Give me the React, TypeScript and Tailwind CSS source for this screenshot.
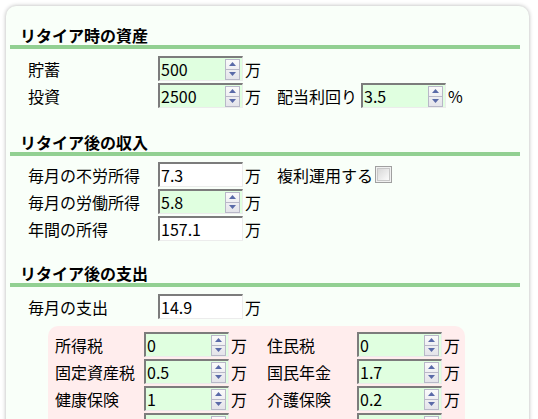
const FONT = { fontFamily: '"Noto Sans CJK JP", "Noto Sans", sans-serif' };

function Spinner() {
  return (
    <div className="ml-auto mr-[2px] flex h-[21px] w-[15px] flex-col border border-[#b8b8c8] bg-gradient-to-b from-[#fafafa] to-[#e4e4ea]">
      <div className="flex flex-1 items-center justify-center border-b border-[#b8b8c8]">
        <svg width="7" height="4" viewBox="0 0 7 4">
          <path d="M0 4 L3.5 0 L7 4 Z" fill="#5a6aa8" />
        </svg>
      </div>
      <div className="flex flex-1 items-center justify-center">
        <svg width="7" height="4" viewBox="0 0 7 4">
          <path d="M0 0 L3.5 4 L7 0 Z" fill="#5a6aa8" />
        </svg>
      </div>
    </div>
  );
}

function NumBox({ value, spin = true }: { value: string; spin?: boolean }) {
  return (
    <div
      className={`flex h-[25px] w-[85px] items-center border-l-2 border-t-2 border-b border-r border-l-[#7c7c7c] border-t-[#7c7c7c] border-b-[#ececec] border-r-[#ececec] pl-[1px] text-[16px] leading-none text-black ${
        spin ? 'bg-[#e0ffe0]' : 'bg-white'
      }`}
    >
      {value && <span>{value}</span>}
      {spin && <Spinner />}
    </div>
  );
}

function Heading({ children }: { children: string }) {
  return (
    <div>
      <div className="pl-[10px] text-[16px] font-bold leading-[20px]">{children}</div>
      <div className="h-[4px] w-[510px] bg-[#92d092]" />
    </div>
  );
}

function Row({ label, children }: { label: string; children: React.ReactNode }) {
  return (
    <div className="flex h-[25px] items-center">
      <span className="w-[130px]">{label}</span>
      {children}
    </div>
  );
}

function Unit({ u = '万' }: { u?: string }) {
  return <span className="ml-[2px]">{u}</span>;
}

function PinkRow({
  l1,
  v1,
  l2,
  v2,
}: {
  l1: string;
  v1: string;
  l2: string;
  v2: string;
}) {
  return (
    <div className="flex h-[25px] items-center">
      <span className="w-[89px]">{l1}</span>
      <NumBox value={v1} />
      <span className="ml-[2px] w-[16px]">{l1 ? '万' : ''}</span>
      <span className="ml-[20px] w-[90px]">{l2}</span>
      <NumBox value={v2} />
      <span className="ml-[2px]">{l2 ? '万' : ''}</span>
    </div>
  );
}

export default function App() {
  return (
    <div className="h-[419px] w-[538px] overflow-hidden bg-white text-[16px] text-black" style={FONT}>
      <div className="ml-[6px] mt-[6px] h-[440px] w-[523px] rounded-[10px] bg-[#f9fff9] pt-[19px] shadow-[0_0_4px_rgba(0,0,0,0.3)]">
        <div className="ml-[4px]">
          <Heading>リタイア時の資産</Heading>
          <div className="mt-[7px] flex flex-col gap-[2px] pl-[18px]">
            <Row label="貯蓄">
              <NumBox value="500" />
              <Unit />
            </Row>
            <Row label="投資">
              <NumBox value="2500" />
              <Unit />
              <span className="ml-[16px] mr-[4px]">配当利回り</span>
              <NumBox value="3.5" />
              <Unit u="%" />
            </Row>
          </div>

          <div className="mt-[24px]">
            <Heading>リタイア後の収入</Heading>
          </div>
          <div className="mt-[6px] flex flex-col gap-[2px] pl-[18px]">
            <Row label="毎月の不労所得">
              <NumBox value="7.3" spin={false} />
              <Unit />
              <span className="ml-[16px]">複利運用する</span>
              <span className="ml-[2px] flex h-[17px] w-[17px] items-center justify-center border border-[#a0a0a0] bg-[#f0f0f0]">
                <span className="h-[13px] w-[13px] border border-[#c8c8c8] bg-gradient-to-br from-[#d8d8d8] to-[#fcfcfc]" />
              </span>
            </Row>
            <Row label="毎月の労働所得">
              <NumBox value="5.8" />
              <Unit />
            </Row>
            <Row label="年間の所得">
              <NumBox value="157.1" spin={false} />
              <Unit />
            </Row>
          </div>

          <div className="mt-[22px]">
            <Heading>リタイア後の支出</Heading>
          </div>
          <div className="mt-[7px] pl-[18px]">
            <Row label="毎月の支出">
              <NumBox value="14.9" spin={false} />
              <Unit />
            </Row>
            <div className="ml-[20px] mt-[7px] flex w-[417px] flex-col gap-[2px] rounded-[10px] bg-[#ffeded] pb-[8px] pl-[7px] pt-[6px]">
              <PinkRow l1="所得税" v1="0" l2="住民税" v2="0" />
              <PinkRow l1="固定資産税" v1="0.5" l2="国民年金" v2="1.7" />
              <PinkRow l1="健康保険" v1="1" l2="介護保険" v2="0.2" />
              <PinkRow l1="" v1="" l2="" v2="" />
            </div>
          </div>
        </div>
      </div>
    </div>
  );
}
